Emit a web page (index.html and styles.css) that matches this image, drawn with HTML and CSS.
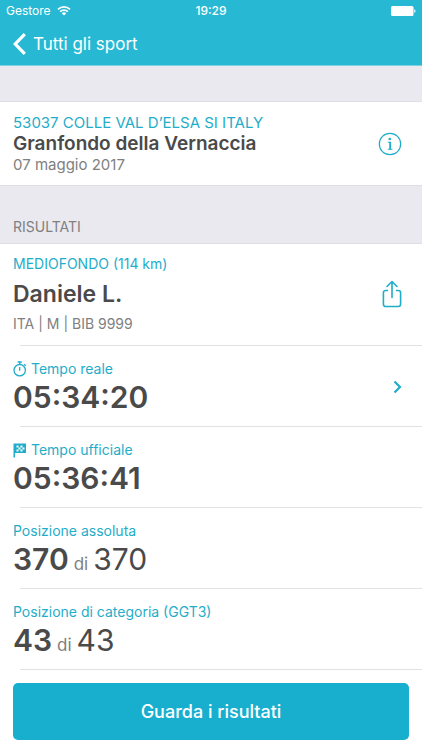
FILE: index.html
```html
<!DOCTYPE html>
<html lang="it">
<head>
    <meta charset="UTF-8">
    <meta name="viewport" content="width=device-width, initial-scale=1.0">
    <title>Granfondo della Vernaccia - Risultati</title>
    <link rel="stylesheet" href="styles.css">
</head>
<body>
    <header class="header">
        <div class="status-bar">
            <div class="carrier">
                <span>Gestore</span>
                <svg width="14" height="10" viewBox="0 0 14 10" fill="none" stroke="currentColor" stroke-width="1.7" aria-hidden="true">
                    <path d="M1 3.4a8.6 8.6 0 0 1 12 0"/>
                    <path d="M3.2 5.7a5.4 5.4 0 0 1 7.6 0"/>
                    <path d="M7 9.6 4.8 7.4a3.1 3.1 0 0 1 4.4 0z" fill="currentColor" stroke="none"/>
                </svg>
            </div>
            <time class="clock">19:29</time>
            <div class="battery">
                <svg width="25" height="10" viewBox="0 0 25 10" fill="currentColor" aria-hidden="true">
                    <rect width="22.5" height="10" rx="1.5"/>
                    <path d="M23.3 3.2c1.6.3 1.6 3.3 0 3.6z"/>
                </svg>
            </div>
        </div>
        <nav class="nav">
            <a href="#" class="back">
                <svg width="13" height="22" viewBox="0 0 13 22" fill="none" stroke="currentColor" stroke-width="3.2" aria-hidden="true">
                    <path d="M11.8 1.2 2.2 11l9.6 9.8"/>
                </svg>
                <span>Tutti gli sport</span>
            </a>
        </nav>
    </header>

    <main>
        <section class="panel event">
            <div>
                <p class="place">53037 COLLE VAL D’ELSA SI ITALY</p>
                <h1>Granfondo della Vernaccia</h1>
                <p class="date">07 maggio 2017</p>
            </div>
            <button type="button" class="icon-btn" aria-label="Informazioni">
                <svg width="24" height="24" viewBox="0 0 24 24" fill="none" stroke="currentColor" aria-hidden="true">
                    <circle cx="12" cy="12" r="10.7" stroke-width="1.2"/>
                    <circle cx="11.8" cy="7" r="1.3" fill="currentColor" stroke="none"/>
                    <path d="M9.8 10.2h2.5v7M9.7 17.3h4.7" stroke-width="1.1"/>
                    <path d="M12.2 10v7.3" stroke-width="1.8"/>
                </svg>
            </button>
        </section>

        <h2 class="section-title">RISULTATI</h2>

        <section class="panel results">
            <div class="row athlete">
                <div>
                    <p class="label">MEDIOFONDO (114 km)</p>
                    <h3>Daniele L.</h3>
                    <p class="details">ITA | M | BIB 9999</p>
                </div>
                <button type="button" class="icon-btn" aria-label="Condividi">
                    <svg width="20" height="28" viewBox="0 0 20 28" fill="none" stroke="currentColor" stroke-width="1.6" stroke-linecap="round" stroke-linejoin="round" aria-hidden="true">
                        <path d="M5.5 10.5H3.6a2.2 2.2 0 0 0-2.2 2.2v11.6a2.2 2.2 0 0 0 2.2 2.2h12.800a2.200 2.200 0 0 0 2.200-2.200V12.700a2.200 2.200 0 0 0-2.200-2.200h-1.900"/>
                        <path d="M10 17.500V1.500M5 6.500l5-5 5 5"/>
                    </svg>
                </button>
            </div>
            <a href="#" class="row">
                <div>
                    <p class="label">
                        <svg width="14" height="16" viewBox="0 0 14 16" fill="none" stroke="currentColor" stroke-width="1.3" aria-hidden="true">
                            <circle cx="6.7" cy="9.2" r="5.7"/>
                            <path d="M4.6 1h4.200M6.700 1v2.500M6.700 6v3.700M11.200 3.200l1.500 1.500"/>
                        </svg>
                        Tempo reale
                    </p>
                    <p class="value"><strong>05:34:20</strong></p>
                </div>
                <svg class="chevron" width="9" height="14" viewBox="0 0 9 14" fill="none" stroke="currentColor" stroke-width="2.2" aria-hidden="true">
                    <path d="M1.500 1.500 7 7l-5.500 5.500"/>
                </svg>
            </a>
            <div class="row">
                <div>
                    <p class="label">
                        <svg width="14" height="16" viewBox="0 0 14 16" fill="currentColor" aria-hidden="true">
                            <path fill-rule="evenodd" d="M.5 1.500h12.500v9.500H2V15.500H.5zM3.500 3.500v2h2v-2zM7.500 3.500v2h2v-2zM5.500 5.500v2h2v-2zM3.500 7.500v2h2v-2zM7.500 7.500v2h2v-2zM9.500 5.500v2h2v-2z"/>
                        </svg>
                        Tempo ufficiale
                    </p>
                    <p class="value"><strong>05:36:41</strong></p>
                </div>
            </div>
            <div class="row">
                <div>
                    <p class="label">Posizione assoluta</p>
                    <p class="value"><strong>370</strong> <small>di</small> <span>370</span></p>
                </div>
            </div>
            <div class="row">
                <div>
                    <p class="label">Posizione di categoria (GGT3)</p>
                    <p class="value"><strong>43</strong> <small>di</small> <span>43</span></p>
                </div>
            </div>
        </section>
    </main>

    <footer class="footer">
        <button type="button" class="btn">Guarda i risultati</button>
    </footer>
</body>
</html>
```

FILE: styles.css
```css
* {
    margin: 0;
    padding: 0;
    box-sizing: border-box;
}

body {
    font-family: Inter, "Liberation Sans", sans-serif;
    font-size: 14px;
    line-height: 20px;
    color: #4a4a4a;
    background: #fff;
}

a {
    color: inherit;
    text-decoration: none;
}

button {
    font-family: inherit;
    border: none;
    cursor: pointer;
}

svg {
    display: block;
    flex-shrink: 0;
}

/* Header */
.header {
    background: #27b9d3;
    color: #fff;
    border-bottom: 1px solid #7fd0e0;
}

.status-bar {
    display: grid;
    grid-template-columns: 1fr auto 1fr;
    align-items: center;
    height: 22px;
    padding: 0 6px;
    font-size: 12px;
}

.carrier {
    display: flex;
    align-items: center;
    gap: 6px;
}

.clock {
    font-weight: 500;
}

.battery {
    justify-self: end;
}

.nav {
    display: flex;
    align-items: center;
    height: 43px;
    padding: 0 13px;
}

.back {
    display: flex;
    align-items: center;
    gap: 7px;
    font-size: 17px;
}

/* Event */
main {
    padding-top: 35px;
    background: #eae9f0;
}

.panel {
    background: #fff;
    border-top: 1px solid #dfdee4;
}

.event {
    display: flex;
    align-items: center;
    justify-content: space-between;
    padding: 11px 20px 10px 13px;
    border-bottom: 1px solid #dfdee4;
}

.place {
    font-size: 15px;
    color: #1fadc9;
}

h1 {
    font-size: 19px;
    font-weight: 600;
    line-height: 22px;
}

.date {
    font-size: 15px;
    color: #808080;
}

.icon-btn {
    background: none;
    color: #1fadc9;
}

.section-title {
    padding: 31px 13px 6px;
    font-size: 14px;
    font-weight: 400;
    color: #808080;
}

/* Results */
.row {
    display: flex;
    align-items: center;
    justify-content: space-between;
    height: 81px;
    padding: 0 20px 0 13px;
    background: linear-gradient(#e2e2e4, #e2e2e4) 20px 100% / 100% 1px no-repeat;
}

.athlete {
    height: 102px;
    padding-bottom: 3px;
}

.label {
    display: flex;
    align-items: center;
    gap: 4px;
    color: #1fadc9;
}

h3 {
    margin: 8px 0;
    font-size: 23px;
    font-weight: 600;
    line-height: 24px;
}

.details {
    color: #808080;
}

.value {
    display: flex;
    align-items: baseline;
    gap: 5px;
    font-size: 30px;
    line-height: 36px;
}

.value strong {
    font-weight: 600;
}

.value small {
    font-size: 17px;
    line-height: 20px;
    color: #808080;
}

.chevron {
    color: #1fadc9;
}

/* Footer */
.footer {
    padding: 13px 13px 10px;
}

.btn {
    width: 100%;
    height: 57px;
    background: #18afcf;
    color: #fff;
    border-radius: 5px;
    font-size: 18px;
    font-weight: 500;
}
```
